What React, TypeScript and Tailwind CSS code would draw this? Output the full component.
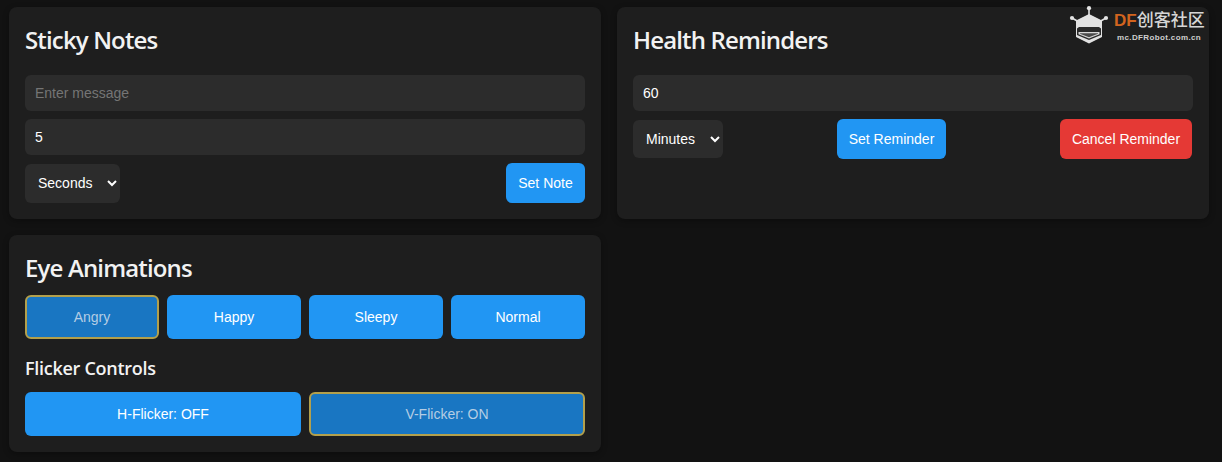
const sans = "font-['Liberation_Sans',Arial,sans-serif]";

function Card({ children }: { children: React.ReactNode }) {
  return <section className="rounded-lg bg-[#1e1e1e] p-4 shadow-[0_2px_6px_rgba(0,0,0,0.3)]">{children}</section>;
}

function Heading({ children }: { children: React.ReactNode }) {
  return <h2 className="font-['Open_Sans',sans-serif] text-[24px] leading-[34px] font-semibold tracking-[-0.85px] text-[#f2f2f2]">{children}</h2>;
}

function Btn({ children, active, red, className = "" }: { children: React.ReactNode; active?: boolean; red?: boolean; className?: string }) {
  const tone = active
    ? "border-2 border-[#b3a04c] bg-[#1976c2] text-[#b4cde4]"
    : red
      ? "bg-[#e53935] text-white"
      : "bg-[#2196f3] text-white";
  return <button className={`rounded-md text-[14px] ${tone} ${className}`}>{children}</button>;
}

function Field({ value, placeholder }: { value?: string; placeholder?: string }) {
  return (
    <input
      readOnly
      value={value}
      placeholder={placeholder}
      className="block h-9 w-full rounded-md bg-[#2c2c2c] px-2.5 text-[14px] text-white outline-none placeholder:text-[#757575]"
    />
  );
}

function Sel({ value, className }: { value: string; className: string }) {
  return (
    <select defaultValue={value} className={`rounded-md bg-[#2c2c2c] px-[9px] text-[14px] text-white outline-none ${className}`}>
      <option>Seconds</option>
      <option>Minutes</option>
    </select>
  );
}

function Logo() {
  return (
    <div className="absolute top-[6px] left-[1068px] flex items-start gap-[4px]">
      <svg width="42" height="38" viewBox="0 0 42 38">
        <path d="M21 2 V10 M4 12 L11 16 M38 12 L31 16" stroke="#e4e4e4" strokeWidth="1.6" />
        <circle cx="21" cy="2.2" r="2.1" fill="#e4e4e4" />
        <circle cx="4" cy="12" r="2.1" fill="#e4e4e4" />
        <circle cx="38" cy="12" r="2.1" fill="#e4e4e4" />
        <path d="M21 8 L34 14.5 V31 L21 37.5 L8 31 V14.5 Z" fill="#e2e2e2" />
        <path d="M11 21 H31 L33 22.5 V29 L21 34 L9 29 V22.5 Z" fill="#2a2a2a" />
        <path d="M10.5 26 H31.5 V28.2 L21 32.6 L10.5 28.2 Z" fill="#d8d8d8" />
        <path d="M12 27.2 H30 V27.8 L21 31.2 L12 27.8 Z" fill="#4a4a4a" />
      </svg>
      <div className="pt-[2px]">
        <div className="font-['Noto_Sans_CJK_SC',sans-serif] text-[17px] leading-[21px] font-medium whitespace-nowrap text-[#d6d6d6]">
          <span className="font-['Liberation_Sans',sans-serif] font-bold text-[#d2641f]">DF</span>创客社区
        </div>
        <div className={`${sans} mt-[2px] pl-[3px] text-[8px] leading-[10px] font-bold tracking-[0.37px] whitespace-nowrap text-[#cfcfcf]`}>
          mc.DFRobot.com.cn
        </div>
      </div>
    </div>
  );
}

export default function App() {
  return (
    <div className={`${sans} relative h-[462px] overflow-hidden bg-[#121212] pt-[7px] pr-[13px] pl-[9px]`}>
      <div className="grid grid-cols-2 gap-4">
        <Card>
          <div className="mb-[18px]"><Heading>Sticky Notes</Heading></div>
          <div className="flex flex-col gap-2">
            <Field placeholder="Enter message" />
            <Field value="5" />
          </div>
          <div className="mt-2 flex items-center justify-between">
            <Sel value="Seconds" className="h-[39px] w-[95px]" />
            <Btn className="h-10 w-[79px]">Set Note</Btn>
          </div>
        </Card>
        <Card>
          <div className="mb-[18px]"><Heading>Health Reminders</Heading></div>
          <Field value="60" />
          <div className="mt-2 flex items-center justify-between pr-px">
            <Sel value="Minutes" className="h-[38px] w-[90px]" />
            <Btn className="h-10 w-[109px]">Set Reminder</Btn>
            <Btn red className="h-10 w-[132px]">Cancel Reminder</Btn>
          </div>
        </Card>
        <Card>
          <div className="mb-[10px]"><Heading>Eye Animations</Heading></div>
          <div className="grid grid-cols-4 gap-2">
            <Btn active className="h-11">Angry</Btn>
            <Btn className="h-11">Happy</Btn>
            <Btn className="h-11">Sleepy</Btn>
            <Btn className="h-11">Normal</Btn>
          </div>
          <h3 className="mt-[16px] mb-[11px] font-['Open_Sans',sans-serif] text-[18px] leading-[26px] font-semibold tracking-[-0.28px] text-[#f2f2f2]">Flicker Controls</h3>
          <div className="grid grid-cols-2 gap-2">
            <Btn className="h-11">H-Flicker: OFF</Btn>
            <Btn active className="h-11">V-Flicker: ON</Btn>
          </div>
        </Card>
      </div>
      <Logo />
    </div>
  );
}
